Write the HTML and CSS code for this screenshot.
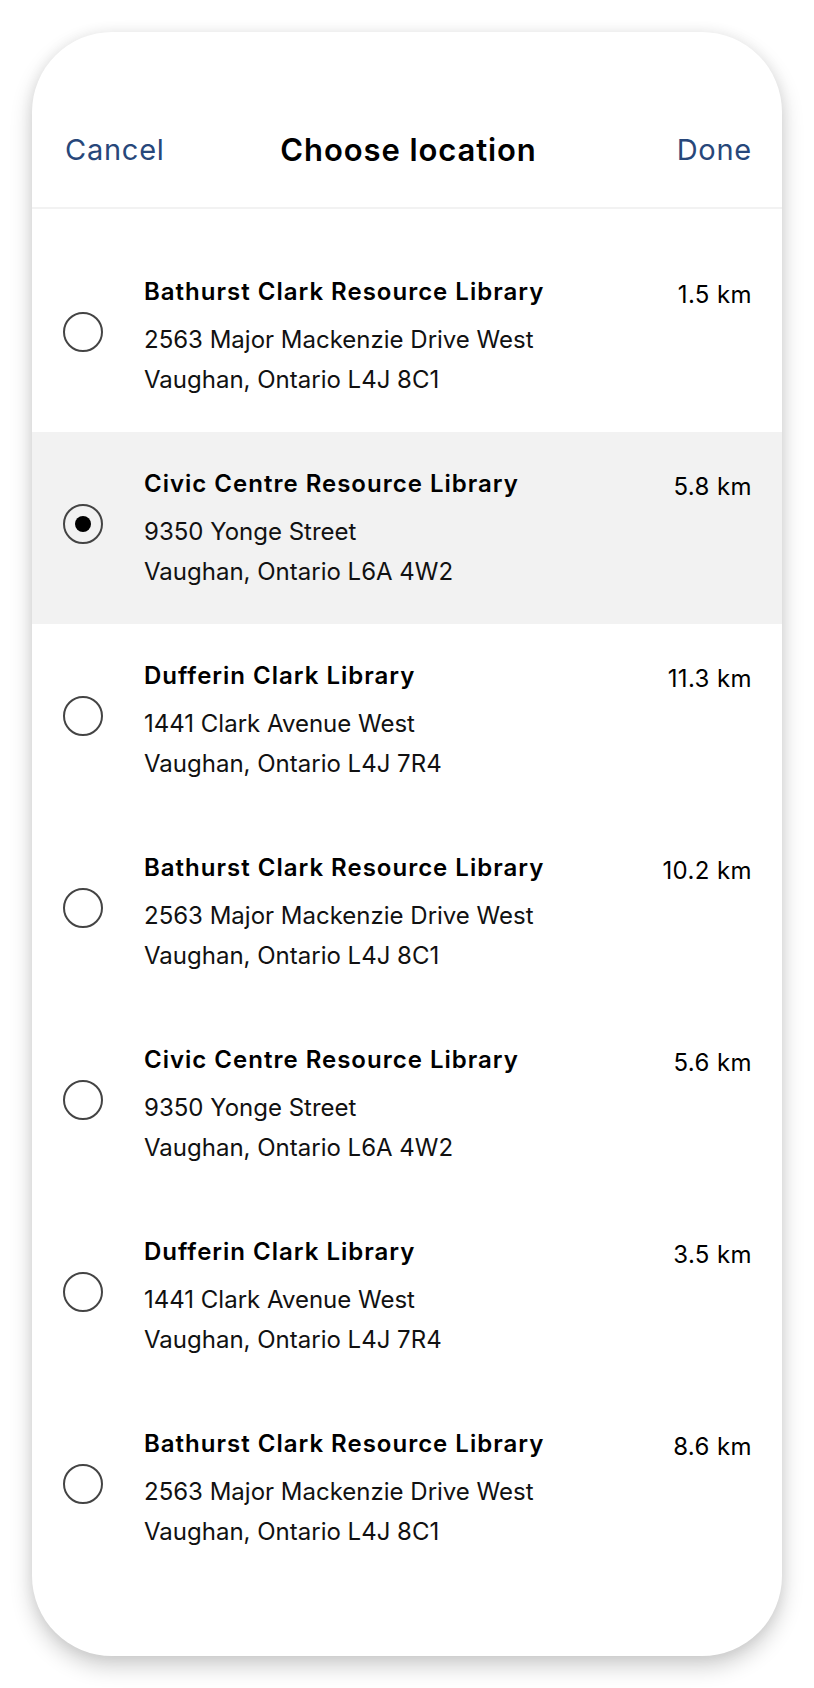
FILE: index.html
```html
<!DOCTYPE html>
<html>
<head>
<meta charset="utf-8">
<link rel="stylesheet" href="styles.css">
</head>
<body>
<div class="sheet">
  <header class="header">
    <span class="action">Cancel</span>
    <span class="title">Choose location</span>
    <span class="action done">Done</span>
  </header>
  <ul class="list">
    <li class="row">
      <span class="radio"></span>
      <div class="info">
        <div class="name">Bathurst Clark Resource Library</div>
        <div class="addr">2563 Major Mackenzie Drive West</div>
        <div class="addr">Vaughan, Ontario L4J 8C1</div>
      </div>
      <span class="dist">1.5 km</span>
    </li>
    <li class="row selected">
      <span class="radio on"></span>
      <div class="info">
        <div class="name">Civic Centre Resource Library</div>
        <div class="addr">9350 Yonge Street</div>
        <div class="addr">Vaughan, Ontario L6A 4W2</div>
      </div>
      <span class="dist">5.8 km</span>
    </li>
    <li class="row">
      <span class="radio"></span>
      <div class="info">
        <div class="name">Dufferin Clark Library</div>
        <div class="addr">1441 Clark Avenue West</div>
        <div class="addr">Vaughan, Ontario L4J 7R4</div>
      </div>
      <span class="dist">11.3 km</span>
    </li>
    <li class="row">
      <span class="radio"></span>
      <div class="info">
        <div class="name">Bathurst Clark Resource Library</div>
        <div class="addr">2563 Major Mackenzie Drive West</div>
        <div class="addr">Vaughan, Ontario L4J 8C1</div>
      </div>
      <span class="dist">10.2 km</span>
    </li>
    <li class="row">
      <span class="radio"></span>
      <div class="info">
        <div class="name">Civic Centre Resource Library</div>
        <div class="addr">9350 Yonge Street</div>
        <div class="addr">Vaughan, Ontario L6A 4W2</div>
      </div>
      <span class="dist">5.6 km</span>
    </li>
    <li class="row">
      <span class="radio"></span>
      <div class="info">
        <div class="name">Dufferin Clark Library</div>
        <div class="addr">1441 Clark Avenue West</div>
        <div class="addr">Vaughan, Ontario L4J 7R4</div>
      </div>
      <span class="dist">3.5 km</span>
    </li>
    <li class="row">
      <span class="radio"></span>
      <div class="info">
        <div class="name">Bathurst Clark Resource Library</div>
        <div class="addr">2563 Major Mackenzie Drive West</div>
        <div class="addr">Vaughan, Ontario L4J 8C1</div>
      </div>
      <span class="dist">8.6 km</span>
    </li>
  </ul>
</div>
</body>
</html>
```
FILE: styles.css
```css
* { box-sizing: border-box; }
html, body {
  margin: 0;
  padding: 0;
  background: #ffffff;
}
body {
  font-family: Inter, "Noto Sans", sans-serif;
  color: #000;
  padding: 32px;
}
.sheet {
  width: 750px;
  height: 1624px;
  background: #fff;
  border-radius: 80px;
  box-shadow: 0 10px 22px rgba(0, 0, 0, 0.2), 0 0 14px rgba(0, 0, 0, 0.06);
  overflow: hidden;
}
.header {
  height: 177px;
  padding: 60px 30px 0 33px;
  display: grid;
  grid-template-columns: 1fr auto 1fr;
  align-items: center;
  border-bottom: 2px solid #f2f2f2;
}
.action {
  font-size: 29px;
  color: #27477a;
  letter-spacing: 0.75px;
}
.action.done {
  justify-self: end;
}
.title {
  font-size: 31px;
  font-weight: 600;
  letter-spacing: 0.9px;
}
.list {
  list-style: none;
  margin: 0;
  padding: 31px 0 0 0;
}
.row {
  height: 192px;
  display: flex;
  align-items: flex-start;
  padding: 0 30px 0 31px;
}
.row.selected {
  background: #f2f2f2;
}
.radio {
  flex: none;
  width: 40px;
  height: 40px;
  margin-top: 72px;
  border: 2px solid #444;
  border-radius: 50%;
  display: flex;
  align-items: center;
  justify-content: center;
}
.radio.on::after {
  content: "";
  width: 16px;
  height: 16px;
  border-radius: 50%;
  background: #000;
}
.info {
  flex: 1;
  margin-left: 41px;
  padding-top: 32px;
}
.name {
  font-size: 24px;
  font-weight: 600;
  line-height: 40px;
  margin-bottom: 8px;
  letter-spacing: 1px;
}
.addr {
  font-size: 24px;
  line-height: 40px;
  color: #111;
  letter-spacing: 0;
}
.dist {
  flex: none;
  font-size: 24px;
  line-height: 40px;
  padding-top: 35px;
  letter-spacing: 0.4px;
}
```
